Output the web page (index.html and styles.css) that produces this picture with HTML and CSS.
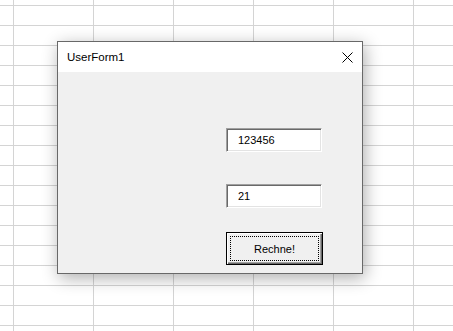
FILE: index.html
```html
<!DOCTYPE html>
<html lang="de">
<head>
  <meta charset="UTF-8"/>
  <meta name="viewport" content="width=device-width, initial-scale=1.0"/>
  <title>UserForm1</title>
  <link rel="stylesheet" href="styles.css">
</head>
<body>
  <div class="sheet">
    <div class="form-window">
      <div class="titlebar">
        <span class="title">UserForm1</span>
        <svg class="close" width="11" height="11" viewBox="0 0 11 11">
          <path d="M0.5 0.5 L10.5 10.5 M10.5 0.5 L0.5 10.5" stroke="#000" stroke-width="1" fill="none"/>
        </svg>
      </div>
      <div class="client">
        <input class="textbox" type="text" value="123456"/>
        <input class="textbox second" type="text" value="21"/>
        <button class="cmd"><span class="focus">Rechne!</span></button>
      </div>
    </div>
  </div>
</body>
</html>
```

FILE: styles.css
```css
*{box-sizing:border-box;margin:0;padding:0;}
html,body{height:100%;}
body{font-family:'Liberation Sans',Arial,sans-serif;background:#fff;overflow:hidden;}
.sheet{
  height:100%;
  padding:41px 0 0 57px;
  background-color:#fff;
  background-image:
    linear-gradient(to right,#d4d4d4 1px,transparent 1px),
    linear-gradient(to bottom,#d4d4d4 1px,transparent 1px);
  background-size:80px 20px;
  background-position:13px 5px;
}
.form-window{
  width:306px;height:233px;
  border:1px solid #686868;
  background:#f0f0f0;
  box-shadow:2px 4px 16px rgba(0,0,0,0.32);
  display:flex;flex-direction:column;
}
.titlebar{
  height:30px;background:#fff;
  display:flex;align-items:center;justify-content:space-between;
  padding:0 9px 0 9px;
}
.title{font-size:11.5px;color:#000;}
.close{display:block;}
.client{
  flex:1;
  display:flex;flex-direction:column;align-items:flex-start;
  padding:56px 0 0 168px;
}
.textbox{
  width:96px;height:24px;
  font-family:inherit;font-size:11px;color:#000;
  padding:0 0 0 11px;
  background:#fff;
  border:1px solid;border-color:#a0a0a0 #fff #fff #a0a0a0;
  box-shadow:inset 1px 1px #696969,inset -1px -1px #e3e3e3;
  outline:none;
}
.second{margin-top:32px;}
.cmd{
  margin-top:24px;
  width:97px;height:33px;
  font-family:inherit;font-size:11px;color:#000;
  background:#f0f0f0;
  border:1px solid #000;
  box-shadow:inset 1px 1px #fff,inset -1px -1px #696969,inset -2px -2px #a0a0a0;
  padding:3px;
  display:flex;
}
.focus{
  flex:1;display:flex;align-items:center;justify-content:center;
  border:1px dotted #000;
}
```
